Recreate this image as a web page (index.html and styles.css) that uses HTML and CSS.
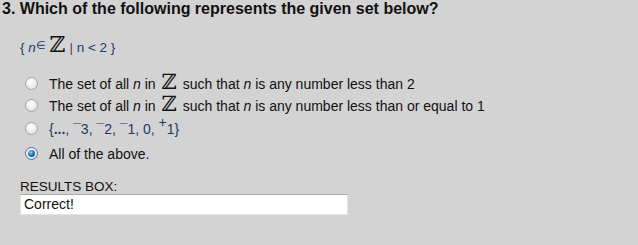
FILE: index.html
```
<!DOCTYPE html>
<html>
<head>
<meta charset="utf-8">
<link rel="stylesheet" href="styles.css">
</head>
<body>
<div class="page">
  <h1 class="q">3. Which of the following represents the given set below?</h1>
  <div class="set">{ <i>n</i><span class="in">∈</span> <span class="z zs">ℤ</span> <span class="bar">|</span> n &lt; 2 }</div>
  <ul class="opts">
    <li class="opt"><span class="radio"></span><span class="lbl">The set of all <i>n</i> in <span class="z">ℤ</span> such that <i>n</i> is any number less than 2</span></li>
    <li class="opt"><span class="radio"></span><span class="lbl">The set of all <i>n</i> in <span class="z">ℤ</span> such that <i>n</i> is any number less than or equal to 1</span></li>
    <li class="opt"><span class="radio"></span><span class="lbl set2">{<b>...</b>, ¯3, ¯2, ¯1, 0, <sup class="pos">+</sup>1}</span></li>
    <li class="opt"><span class="radio on"></span><span class="lbl">All of the above.</span></li>
  </ul>
  <div class="results">
    <div class="rlabel">RESULTS BOX:</div>
    <div class="rbox">Correct!</div>
  </div>
</div>
</body>
</html>
```
FILE: styles.css
```
html, body { margin: 0; padding: 0; }
body {
  background: #d3d3d3;
  width: 638px; height: 245px; overflow: hidden;
  font-family: "Liberation Sans", Arial, sans-serif;
  color: #111;
}
.page { padding: 0 0 0 2px; }
.q { margin: 0; font-size: 16px; font-weight: bold; line-height: 18px; color: #111; }
.set { margin: 20px 0 0 18px; font-size: 13.5px; color: #1a3a6a; line-height: 20px; }
.set i { font-style: italic; }
.in { font-size: 11px; position: relative; top: -3px; }
.bar { color: #6a2c70; }
.z { display: inline-block; font-family: "DejaVu Serif", serif; font-size: 21px; color: #111; line-height: 14px; height: 14px; margin: 0 2px; }
.zs { margin: 0; font-size: 22px; }
.opts { list-style: none; margin: 14px 0 0 0; padding: 0 0 0 23px; }
.opt { display: flex; align-items: center; height: 25px; font-size: 14px; }
.opt:nth-child(1), .opt:nth-child(2) { height: 22px; }
.radio {
  width: 13px; height: 13px; border-radius: 50%;
  box-sizing: border-box;
  border: 1px solid #a4a4a4;
  background: radial-gradient(circle at 40% 35%, #ffffff 0%, #f2f2f2 40%, #d4d4d4 100%);
  margin-right: 11px; flex: none;
  position: relative;
}
.radio.on { border-color: #5a6e86; background: radial-gradient(circle at 40% 35%, #fff 0%, #eaeaea 60%, #c8c8c8 100%); }
.radio.on::after {
  content: ""; position: absolute; left: 2px; top: 2px; width: 7px; height: 7px; border-radius: 50%;
  background: radial-gradient(circle at 40% 35%, #9fd4ff 0%, #1a78c8 45%, #0a3a78 100%);
}
.set2 { color: #1a3a6a; }
.pos { font-size: 14px; vertical-align: 0; position: relative; top: -7px; }
.results { margin: 13px 0 0 18px; font-size: 13.5px; }
.rlabel { line-height: 15px; }
.rbox {
  width: 328px; height: 21px; box-sizing: border-box;
  background: #fff; border: 1px solid #e6e6e6; border-top-color: #a7a7b0;
  padding: 2px 0 0 3px; line-height: 15px; font-size: 14px;
}
```
